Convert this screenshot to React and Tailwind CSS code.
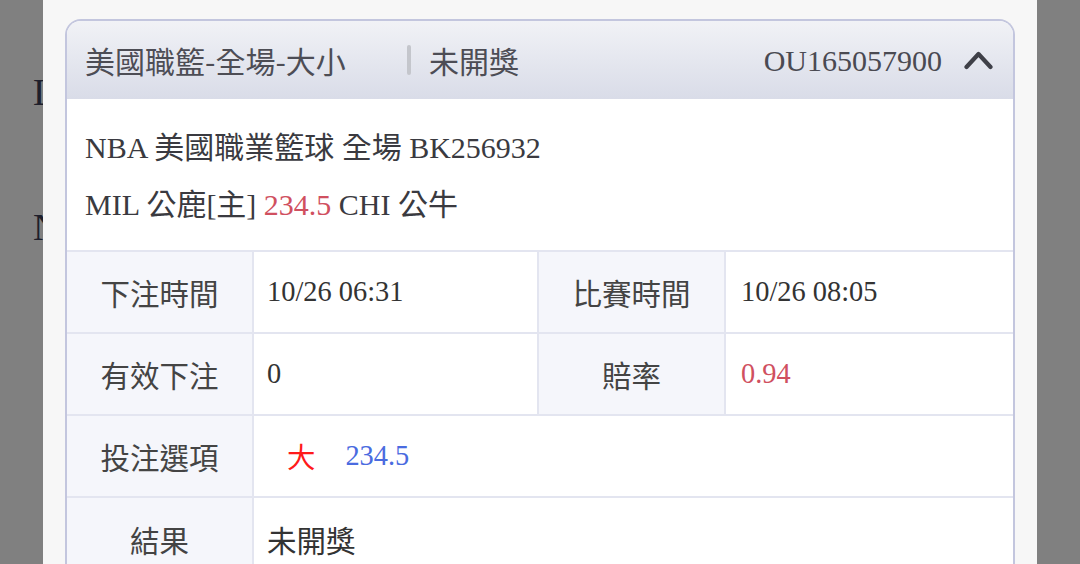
const serif = "font-['Liberation_Serif','Noto_Sans_CJK_TC',serif]";
const sans = "font-['Noto_Sans_CJK_TC','Noto_Sans',sans-serif]";

const Label = ({ children, last }) => (
  <div
    className={`flex items-center justify-center bg-[#f5f6fb] text-[29.5px] text-[#444] ${sans} ${
      last ? "" : "border-b-2"
    } border-r-2 border-[#e3e5f0]`}
  >
    {children}
  </div>
);

const Value = ({ children, className = "", last, right }) => (
  <div
    className={`flex items-center pl-[13px] text-[28.4px] text-[#333] ${serif} ${
      last ? "" : "border-b-2"
    } ${right ? "" : "border-r-2"} border-[#e3e5f0] ${className}`}
  >
    {children}
  </div>
);

export default function App() {
  return (
    <div className="flex h-[564px] w-[1080px] overflow-hidden bg-[#808080]">
      {/* page behind the overlay */}
      <div className="w-[43px] shrink-0 overflow-hidden pl-[33px] pt-[70px]">
        <div className={`text-[38px] leading-[44px] text-[#1e1f2c] ${serif}`}>L</div>
        <div className={`mt-[91px] text-[38px] leading-[44px] text-[#1e1f2c] ${serif}`}>N</div>
      </div>

      {/* modal */}
      <div className="w-[994px] shrink-0 bg-[#f7f7f7] px-[22px] pt-[19px]">
        <div className="overflow-hidden rounded-t-[16px] border-2 border-b-0 border-[#c3c6de] bg-white">
          {/* header */}
          <div className="flex h-[78px] items-center bg-gradient-to-b from-[#f1f2f6] to-[#d9dce8] pl-[18px] pr-[20px]">
            <span className={`w-[322px] text-[30px] text-[#4d4d55] ${sans}`}>美國職籃-全場-大小</span>
            <span className="h-[30px] w-[4px] rounded-sm bg-[#c4c6cc]" />
            <span className={`ml-[18px] text-[30px] text-[#4d4d55] ${sans}`}>未開獎</span>
            <span className={`ml-auto text-[30px] text-[#4a4a52] ${serif}`}>OU165057900</span>
            <svg className="ml-[22px]" width="29" height="20" viewBox="0 0 29 20" fill="none">
              <polyline
                points="2.5,17 14.5,4 26.5,17"
                stroke="#3f4048"
                strokeWidth="4.2"
                strokeLinecap="round"
                strokeLinejoin="round"
              />
            </svg>
          </div>

          {/* match info */}
          <div className={`pl-[18px] pt-[20px] pb-[17px] text-[30px] leading-[57px] text-[#3a3a40] ${serif}`}>
            <div>NBA 美國職業籃球 全場 BK256932</div>
            <div>
              MIL 公鹿[主] <span className="text-[#d0505f]">234.5</span> CHI 公牛
            </div>
          </div>

          {/* detail table */}
          <div className="grid grid-cols-[187px_285px_187px_1fr] auto-rows-[82px] border-t-2 border-[#e3e5f0]">
            <Label>下注時間</Label>
            <Value>10/26 06:31</Value>
            <Label>比賽時間</Label>
            <Value right className="pl-[15px]">10/26 08:05</Value>

            <Label>有效下注</Label>
            <Value>0</Value>
            <Label>賠率</Label>
            <Value right className="pl-[15px] text-[#d0505f]">0.94</Value>

            <Label>投注選項</Label>
            <Value right className="col-span-3 pl-[33px]">
              <span className={`text-[#ff1a1a] ${sans}`}>大</span>
              <span className="ml-[30px] text-[#4a6be0]">234.5</span>
            </Value>

            <Label last>結果</Label>
            <Value right last className={`col-span-3 text-[29.5px] ${sans}`}>未開獎</Value>
          </div>
        </div>
      </div>

      <div className="w-[43px] shrink-0" />
    </div>
  );
}
